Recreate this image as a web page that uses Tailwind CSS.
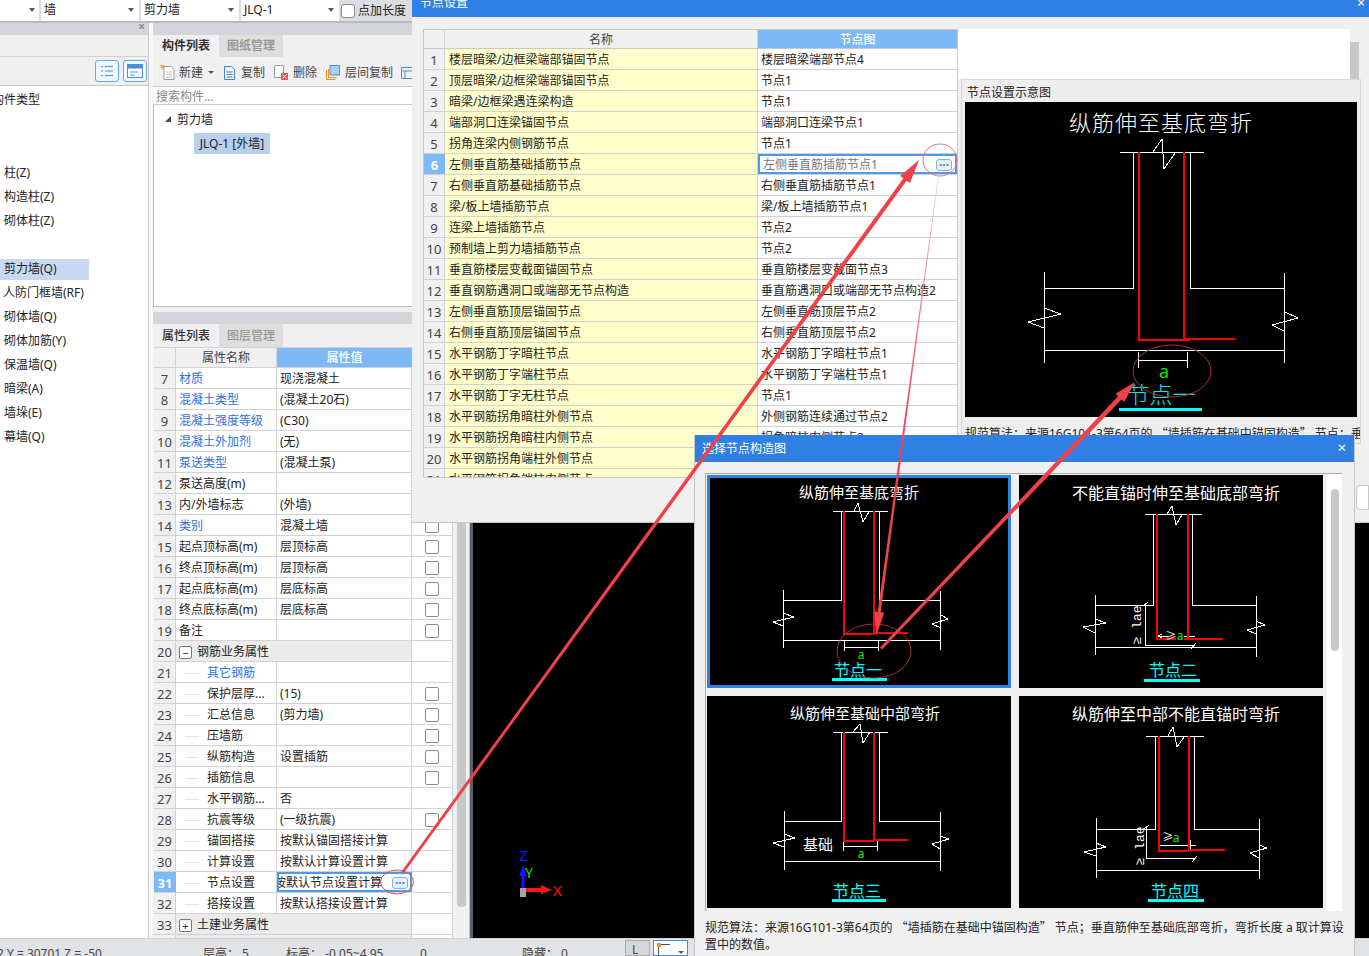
<!DOCTYPE html>
<html lang="zh-CN">
  <head>
    <meta charset="UTF-8" />
    <title>节点设置</title>
    <script src="https://cdn.jsdelivr.net/npm/@tailwindcss/browser@4"></script>
  </head>
  <body class="m-0 font-['Noto_Sans','Noto_Sans_CJK_SC',sans-serif] text-[12px] leading-none text-[#222]">
    <div class="relative flex h-[956px] w-[1369px] flex-col overflow-hidden bg-[#f0f0f0]">
      <!-- Top selectors -->
      <div class="flex h-[23px] shrink-0 gap-[2px] border-b-2 border-[#b9bbc0] bg-[#dcdde1]">
        <div class="relative h-[21px] w-[39px] bg-white"><span class="absolute left-[29px] top-[8px] h-0 w-0 border-x-[3px] border-t-[4px] border-x-transparent border-t-[#555]"></span></div>
        <div class="relative flex h-[21px] w-[98px] items-center bg-white pb-[2px] pl-[3px] text-[12px]">墙<span class="absolute right-[5px] top-[8px] h-0 w-0 border-x-[3px] border-t-[4px] border-x-transparent border-t-[#555]"></span></div>
        <div class="relative flex h-[21px] w-[98px] items-center bg-white pb-[2px] pl-[3px]">剪力墙<span class="absolute right-[5px] top-[8px] h-0 w-0 border-x-[3px] border-t-[4px] border-x-transparent border-t-[#555]"></span></div>
        <div class="relative flex h-[21px] w-[98px] items-center bg-white pb-[2px] pl-[3px]">JLQ-1<span class="absolute right-[5px] top-[8px] h-0 w-0 border-x-[3px] border-t-[4px] border-x-transparent border-t-[#555]"></span></div>
        <div class="flex h-[21px] items-center gap-[3px] whitespace-nowrap"><span class="h-[14px] w-[14px] rounded-[3px] border border-[#888] bg-white"></span>点加长度</div>
      </div>

      <div class="flex min-h-0 flex-1">
        <!-- Component type panel -->
        <div class="flex w-[149px] shrink-0 flex-col border-r border-[#c8c8c8] bg-white">
          <div class="relative h-[12px] bg-[#d3d5da]"><span class="absolute right-[3px] top-[-2px] text-[12px] font-bold text-[#8a8a8a]">×</span></div>
          <div class="h-[22px] border-b border-[#d0d0d0] bg-[#f0f0f0]"></div>
          <div class="flex h-[29px] items-center justify-end gap-[4px] border-b border-[#c8c8c8] bg-[#f0f0f0] pr-[1px]">
            <div class="flex h-[22px] w-[24px] items-center justify-center rounded-[3px] border border-[#62a8ee] bg-[#f0f7fe]">
              <svg width="14" height="14" viewBox="0 0 14 14" fill="none" stroke="#4a90d9"><path d="M1 2.5h2M1 7h2M1 11.5h2M5 2.5h8M5 7h8M5 11.5h8" /></svg>
            </div>
            <div class="flex h-[22px] w-[24px] items-center justify-center rounded-[3px] border border-[#62a8ee] bg-[#f0f7fe]">
              <svg width="16" height="14" viewBox="0 0 16 14"><rect x="0.5" y="0.5" width="15" height="13" fill="#fff" stroke="#4a90d9" /><rect x="1" y="1" width="14" height="3.5" fill="#4a90d9" /><path d="M3 8h8M3 11h5" stroke="#4a90d9" /></svg>
            </div>
          </div>
          <div class="mt-[2px] pl-[4px]">
            <div class="-ml-[12px] flex h-[24px] items-center">构件类型</div>
            <div class="mt-[49px] flex h-[24px] items-center">柱(Z)</div>
            <div class="flex h-[24px] items-center">构造柱(Z)</div>
            <div class="flex h-[24px] items-center">砌体柱(Z)</div>
            <div class="mt-[24px] -ml-[4px] flex h-[24px] items-center"><span class="flex h-[21px] w-[89px] items-center bg-[#c7d8f0] pl-[4px]">剪力墙(Q)</span></div>
            <div class="-ml-[1px] flex h-[24px] items-center">人防门框墙(RF)</div>
            <div class="flex h-[24px] items-center">砌体墙(Q)</div>
            <div class="flex h-[24px] items-center">砌体加筋(Y)</div>
            <div class="flex h-[24px] items-center">保温墙(Q)</div>
            <div class="flex h-[24px] items-center">暗梁(A)</div>
            <div class="flex h-[24px] items-center">墙垛(E)</div>
            <div class="flex h-[24px] items-center">幕墙(Q)</div>
          </div>
        </div>
        <div class="w-[4px] shrink-0 bg-[#f7f7f7]"></div>

        <!-- Component list and properties -->
        <div class="flex w-[317px] shrink-0 flex-col border-r border-[#c4c4c4] bg-[#f0f0f0]">
          <div class="h-[12px] bg-[#d3d5da]"></div>
          <div class="flex h-[22px] pl-[1px]">
            <div class="flex w-[64px] items-center justify-center font-bold text-[#333]">构件列表</div>
            <div class="ml-[1px] flex w-[64px] items-center justify-center bg-[#dedede] font-bold text-[#999]">图纸管理</div>
          </div>
          <div class="flex h-[29px] items-center whitespace-nowrap pl-[7px] pt-[2px] text-[#444]">
            <svg width="16" height="16" viewBox="0 0 16 16" fill="none"><path d="M4 1.5h7l3 3v10H4z" fill="#fff" stroke="#999" /><path d="M6 7h6M6 9.5h6M6 12h6" stroke="#bbb" /><path d="M0 1h5M2.500 0v4M1 0l3 3M4 0L1 3" stroke="#f29b2f" /></svg>
            <span class="ml-[3px]">新建</span>
            <span class="ml-[5px] h-0 w-0 border-x-[3px] border-t-[3px] border-x-transparent border-t-[#555]"></span>
            <svg class="ml-[9px]" width="13" height="14" viewBox="0 0 13 14" fill="none" stroke="#4a84c4"><path d="M1.500 0.500h7l3 3v10h-10zM3.500 6h6M3.500 8.500h6M3.500 11h6" /></svg>
            <span class="ml-[5px]">复制</span>
            <svg class="ml-[9px]" width="14" height="15" viewBox="0 0 14 15"><path d="M0.500 0.500h9v12h-9z" fill="#fff" stroke="#999" /><rect x="7" y="8" width="7" height="7" fill="#e45a5a" /><path d="M8.500 9.500l4 4M12.500 9.500l-4 4" stroke="#fff" /></svg>
            <span class="ml-[5px]">删除</span>
            <svg class="ml-[9px]" width="14" height="15" viewBox="0 0 14 15"><path d="M0.500 5v9.500h9M2.500 4v8.500h8" fill="none" stroke="#f08c2e" /><rect x="4" y="0.500" width="9.500" height="9.500" fill="#a9cdf3" stroke="#4a90d9" /></svg>
            <span class="ml-[5px]">层间复制</span>
            <svg class="ml-[8px]" width="12" height="14" viewBox="0 0 12 14" fill="none" stroke="#4a90d9"><path d="M0.500 1.500h11v11h-11zM0.500 5h11M4 5v7" /></svg>
          </div>
          <div class="flex h-[19px] items-center border-y border-[#c8c8c8] bg-white pl-[3px] pt-[2px] text-[#888]">搜索构件...</div>
          <div class="relative h-[202px] border-b border-l border-[#bdbdbd] bg-white">
            <span class="absolute left-[11px] top-[11px] h-0 w-0 border-b-[6px] border-l-[6px] border-b-[#444] border-l-transparent"></span>
            <span class="absolute left-[23px] top-[9px]">剪力墙</span>
            <span class="absolute left-[40px] top-[28px] flex h-[21px] w-[76px] items-center justify-center bg-[#b8d0f0]">JLQ-1 [外墙]</span>
          </div>
          <div class="h-[5px]"></div>
          <div class="h-[12px] bg-[#d3d5da]"></div>
          <div class="flex h-[23px] pl-[1px]">
            <div class="flex w-[64px] items-center justify-center font-medium text-[#333]">属性列表</div>
            <div class="ml-[1px] flex w-[64px] items-center justify-center bg-[#dedede] font-medium text-[#999]">图层管理</div>
          </div>
          <div class="flex min-h-0 flex-1 items-start overflow-hidden">
            <div id="propTable" class="ml-[1px] w-[299px] shrink-0 bg-white"></div>
            <div class="ml-[4px] mt-[20px] h-[540px] w-[9px] shrink-0 rounded-[4px] bg-[#c8c8c8]"></div>
          </div>
        </div>
        <div class="w-[3px] shrink-0 bg-[#5a6068]"></div>
        <div class="relative flex-1 bg-black">
          <!-- axis gizmo -->
          <svg class="absolute left-[40px] top-[822px]" width="60" height="60" viewBox="0 0 60 60">
            <text x="6" y="16" font-size="15" fill="#1414ff">Z</text>
            <path d="M10 20L14 31H11.500V44H8.500V31H6Z" fill="#1414ff" />
            <text x="12" y="33" font-size="14" fill="#19e619">Y</text>
            <path d="M13 43H28V40L39 45L28 49V47H13Z" fill="#ff1414" />
            <rect x="7" y="43" width="6" height="9" fill="#a6a6a6" />
            <text x="40" y="51" font-size="15" fill="#ff1414">X</text>
          </svg>
        </div>
      </div>

      <!-- Status bar -->
      <div class="flex h-[18px] shrink-0 border-t border-[#cfd0d4] bg-[#e2e3e7] pt-[9px] whitespace-nowrap text-[#444]">
        <span class="absolute left-[-3px]">2 Y = 30701 Z = -50</span>
        <span class="absolute left-[203px]">层高： 5</span>
        <span class="absolute left-[286px]">标高： -0.05~4.95</span>
        <span class="absolute left-[420px]">0</span>
        <span class="absolute left-[522px]">隐藏： 0</span>
        <span class="absolute left-[625px] bottom-0 h-[16px] w-[25px] border border-[#aaa] bg-[#d6d7da] pl-[6px] pt-[3px]">L</span>
        <span class="absolute left-[653px] bottom-0 h-[16px] w-[35px] border border-[#3d8de0] bg-white">
          <span class="ml-[4px] mt-[3px] block h-[14px] w-[12px] border-l border-t border-[#555]"></span>
          <span class="absolute left-[3px] top-[2px] h-[4px] w-[4px] bg-[#f0913a]"></span>
          <span class="absolute right-[3px] top-[10px] h-0 w-0 border-x-[3px] border-t-[3px] border-x-transparent border-t-[#555]"></span>
        </span>
      </div>

      <!-- Node settings window -->
      <div class="absolute left-[412px] top-0 flex h-[523px] w-[957px] flex-col border-b border-[#c4c6cc] bg-[#f0f0f0]">
        <div class="relative flex h-[17px] shrink-0 items-start overflow-hidden bg-[#2f80e2] pl-[8px] text-white">
          <span class="-mt-[3px]">节点设置</span>
          <span class="absolute right-[4px] top-[-4px] text-[14px]">×</span>
        </div>
        <div class="flex pt-[12px] pl-[11px]">
          <div class="h-[449px] w-[535px] shrink-0 overflow-hidden border-x border-b border-[#c8c8c8] bg-white">
            <div class="flex h-[20px] border-y border-[#c8c8c8] bg-[#f0f0f0]">
              <div class="w-[21px] border-r border-[#d0d2d6]"></div>
              <div class="flex w-[313px] items-center justify-center border-r border-[#d0d2d6] pt-[2px] text-[#444]">名称</div>
              <div class="flex flex-1 items-center justify-center bg-[#7eb9f7] pt-[2px] font-medium text-white">节点图</div>
            </div>
            <div id="nodeTable"></div>
          </div>
          <div class="flex w-[411px] flex-col">
            <div class="relative h-[50px] w-[392px] bg-white">
              <div class="absolute left-[392px] top-[13px] h-[37px] w-[9px] bg-[#c8c8c8]"></div>
            </div>
            <div class="ml-[3px] w-[400px] border border-[#d6d6d6] bg-[#eeeeee] pl-[3px]">
              <div class="flex h-[22px] items-center pl-[2px] pt-[3px]">节点设置示意图</div>
              <svg class="block" width="392" height="315" viewBox="0 0 392 315" shape-rendering="crispEdges">
                <rect width="392" height="315" fill="#000" />
                <text x="196" y="29" font-size="22" fill="#fff" text-anchor="middle" letter-spacing="1" font-weight="300">纵筋伸至基底弯折</text>
                <path fill="none" stroke="#fff" d="M155 50H239M168 50V186H79M79 170V261M79 248H319M319 171V261M225 50V186H319M188 50L197 37L199 67L210 51M79 206L96 212L63 220L79 226M320 210L333 216L307 223L319 229M173 258H222M173 250V266M222 250V266" />
                <path fill="none" stroke="#f00" stroke-width="2" d="M174 50V238H225M219 50V238M219 237H270" />
                <text x="199" y="276" font-size="18" fill="#00e600" text-anchor="middle">a</text>
                <text x="196" y="301" font-size="23" fill="#00e5ff" text-anchor="middle" font-weight="300">节点一</text>
                <rect x="154" y="306" width="83" height="3" fill="#00ffff" />
              </svg>
              <div class="mt-[10px] h-[16px] overflow-hidden whitespace-nowrap">规范算法：来源16G101-3第64页的 <span class="font-['Noto_Sans_CJK_SC']">“</span>墙插筋在基础中锚固构造<span class="font-['Noto_Sans_CJK_SC']">”</span> 节点：垂直筋伸至基础底部弯折，</div>
            </div>
          </div>
        </div>
        <div class="absolute left-[944px] top-[485px] h-[25px] w-[13px] rounded-l-[4px] border border-[#c8c8c8] bg-white"></div>
      </div>

      <!-- Choose node diagram window -->
      <div class="absolute left-[694px] top-[435px] flex h-[521px] w-[661px] flex-col border-x border-[#c4c6cc] bg-[#f0f0f0]">
        <div class="relative flex h-[27px] shrink-0 items-center bg-[#2f80e2] pl-[7px] text-white">
          选择节点构造图
          <span class="absolute right-[8px] top-[5px] text-[15px]">×</span>
        </div>
        <div class="ml-[10px] mt-[11px] flex h-[438px] w-[637px] shrink-0 border-l border-t border-[#aaaaaa]">
          <div class="grid w-[622px] shrink-0 grid-cols-[304px_304px] grid-rows-[213px_212px] gap-x-[8px] gap-y-[8px] pl-[1px] pt-[1px]">
            <div class="border-[3px] border-[#2f80e2]">
              <svg class="block" width="298" height="207" viewBox="0 0 298 207" shape-rendering="crispEdges">
                <rect width="298" height="207" fill="#000" />
                <text x="149" y="20" font-size="15" fill="#fff" text-anchor="middle">纵筋伸至基底弯折</text>
                <path fill="none" stroke="#fff" d="M123 33H178M131 33V122H73M73 112V170M73 162H230M230 113V172M169 33V122H230M144 33L148 25L153 44L159 34M73 135L84 139L63 144L73 148M231 137L238 141L222 146L231 150M134 169H168M134 163V173M168 163V173" />
                <path fill="none" stroke="#f00" stroke-width="2" d="M134 33V156H164M164 33V156M164 155H198" />
                <text x="151" y="181" font-size="12" fill="#19e619" text-anchor="middle">a</text>
                <text x="148" y="198" font-size="16" fill="#00ffff" text-anchor="middle">节点一</text>
                <rect x="122" y="200" width="55" height="3" fill="#00ffff" />
              </svg>
            </div>
            <svg class="block" width="304" height="213" viewBox="0 0 304 213" shape-rendering="crispEdges">
              <rect width="304" height="213" fill="#000" />
              <text x="157" y="24" font-size="16" fill="#fff" text-anchor="middle">不能直锚时伸至基础底部弯折</text>
              <path fill="none" stroke="#fff" d="M126 39H183M134 39V130H76M76 120V180M76 172H237M237 121V182M173 39V130H237M148 39L153 31L157 50L163 40M76 144L87 148L64 152L76 158M237 146L246 150L228 155L237 159M126 128V170H174M124 131L129 127M172 174L177 168M139 161H149M165 161H176M139 161L143 159M139 161L143 163" />
              <path fill="none" stroke="#f00" stroke-width="2" d="M138 39V164H157M169 39V164M165 164H204" />
              <text x="0" y="0" font-size="13" fill="#fff" text-anchor="middle" transform="translate(122 150) rotate(-90)" font-family="Liberation Mono">≥ lae</text>
              <text x="152" y="165" font-size="11" fill="#fff" text-anchor="middle">≥</text>
              <text x="161" y="165" font-size="12" fill="#19e619" text-anchor="middle">a</text>
              <text x="154" y="201" font-size="16" fill="#00ffff" text-anchor="middle">节点二</text>
              <rect x="125" y="204" width="56" height="3" fill="#00ffff" />
            </svg>
            <svg class="block" width="304" height="212" viewBox="0 0 304 212" shape-rendering="crispEdges">
              <rect width="304" height="212" fill="#000" />
              <text x="158" y="23" font-size="15" fill="#fff" text-anchor="middle">纵筋伸至基础中部弯折</text>
              <path fill="none" stroke="#fff" d="M126 36H181M134 36V125H77M77 115V174M77 165H233M233 116V175M172 36V125H233M146 36L153 28L156 47L163 36M77 138L88 142L66 147L77 151M233 140L242 143L225 148L233 153M136 150H170M136 145V155M170 145V155" />
              <path fill="none" stroke="#f00" stroke-width="2" d="M137 36V145H167M167 36V145M167 144H201" />
              <text x="111" y="154" font-size="15" fill="#fff" text-anchor="middle">基础</text>
              <text x="154" y="162" font-size="12" fill="#19e619" text-anchor="middle">a</text>
              <text x="150" y="201" font-size="16" fill="#00ffff" text-anchor="middle">节点三</text>
              <rect x="125" y="203" width="54" height="3" fill="#00ffff" />
            </svg>
            <svg class="block" width="304" height="212" viewBox="0 0 304 212" shape-rendering="crispEdges">
              <rect width="304" height="212" fill="#000" />
              <text x="157" y="24" font-size="16" fill="#fff" text-anchor="middle">纵筋伸至中部不能直锚时弯折</text>
              <path fill="none" stroke="#fff" d="M127 40H185M136 40V133H77M77 122V182M77 174H240M240 123V183M175 40V133H240M149 40L154 31L158 51L165 41M77 147L87 151L65 156L77 160M240 149L248 152L231 157L240 162M127 131V162H175M125 133L130 129M173 166L178 160M140 149H177M140 144V155M171 144V155" />
              <path fill="none" stroke="#f00" stroke-width="2" d="M140 40V155H170M170 40V155M170 154H206" />
              <text x="0" y="0" font-size="13" fill="#fff" text-anchor="middle" transform="translate(125 150) rotate(-90)" font-family="Liberation Mono">≥ lae</text>
              <text x="149" y="145" font-size="11" fill="#fff" text-anchor="middle">≥</text>
              <text x="157" y="146" font-size="12" fill="#19e619" text-anchor="middle">a</text>
              <text x="156" y="201" font-size="16" fill="#00ffff" text-anchor="middle">节点四</text>
              <rect x="129" y="203" width="56" height="3" fill="#00ffff" />
            </svg>
          </div>
          <div class="ml-[-1px] w-[15px] bg-white pl-[4px] pt-[15px]">
            <div class="h-[162px] w-[8px] rounded-[4px] bg-[#c8c8c8]"></div>
          </div>
        </div>
        <div class="ml-[10px] mt-[7px] w-[642px] leading-[17px] text-[#222]">规范算法：来源16G101-3第64页的 <span class="font-['Noto_Sans_CJK_SC']">“</span>墙插筋在基础中锚固构造<span class="font-['Noto_Sans_CJK_SC']">”</span> 节点；垂直筋伸至基础底部弯折，弯折长度 a 取计算设置中的数值。</div>
      </div>

      <!-- Red markup drawn over the screenshot -->
      <svg class="pointer-events-none absolute left-0 top-0" width="1369" height="956" viewBox="0 0 1369 956">
        <defs>
          <linearGradient id="fade" gradientUnits="userSpaceOnUse" x1="938" y1="177" x2="900" y2="450">
            <stop offset="0" stop-color="#f8b8bc" />
            <stop offset="1" stop-color="#f04048" />
          </linearGradient>
        </defs>
        <ellipse cx="397" cy="882" rx="16.500" ry="12" fill="none" stroke="#e8505a" />
        <ellipse cx="940" cy="160" rx="17" ry="16" fill="none" stroke="#e8707a" />
        <ellipse cx="1172" cy="371" rx="39" ry="26" fill="none" stroke="#a83030" />
        <ellipse cx="874" cy="651" rx="37" ry="27" fill="none" stroke="#a83030" />
        <path d="M401.500 871.500L403.500 873.500L906.600 180.700L910 183L919 160L900 176L903.400 178.300Z" fill="#f04048" />
        <path d="M938 177L938.500 177L880.700 612L884.200 613L876 636L874.200 611L877.700 612Z" fill="url(#fade)" />
        <path d="M880 647.500L882 649.500L1121.500 399.500L1124.100 402L1135 382L1115.500 393.800L1118.100 396.300Z" fill="#f04048" />
      </svg>
    </div>

    <script>
      const props = [
        [7, "材质", "现浇混凝土", 1, 1],
        [8, "混凝土类型", "(混凝土20石)", 1, 1],
        [9, "混凝土强度等级", "(C30)", 1, 1],
        [10, "混凝土外加剂", "(无)", 1, 1],
        [11, "泵送类型", "(混凝土泵)", 1, 1],
        [12, "泵送高度(m)", "", 0, 1],
        [13, "内/外墙标志", "(外墙)", 0, 1],
        [14, "类别", "混凝土墙", 1, 1],
        [15, "起点顶标高(m)", "层顶标高", 0, 1],
        [16, "终点顶标高(m)", "层顶标高", 0, 1],
        [17, "起点底标高(m)", "层底标高", 0, 1],
        [18, "终点底标高(m)", "层底标高", 0, 1],
        [19, "备注", "", 0, 1],
      ];
      const rebar = [
        [21, "其它钢筋", "", 1, 0],
        [22, "保护层厚...", "(15)", 0, 1],
        [23, "汇总信息", "(剪力墙)", 0, 1],
        [24, "压墙筋", "", 0, 1],
        [25, "纵筋构造", "设置插筋", 0, 1],
        [26, "插筋信息", "", 0, 1],
        [27, "水平钢筋...", "否", 0, 0],
        [28, "抗震等级", "(一级抗震)", 0, 1],
        [29, "锚固搭接", "按默认锚固搭接计算", 0, 0],
        [30, "计算设置", "按默认计算设置计算", 0, 0],
        [31, "节点设置", "", 0, 0],
        [32, "搭接设置", "按默认搭接设置计算", 0, 0],
      ];

      const check = (on) =>
        on ? '<span class="h-[14px] w-[14px] rounded-[2px] border border-[#8c8c8c] bg-white"></span>' : "";

      function propRow([n, name, value, link, box]) {
        return `<div class="flex h-[21px] border-b border-[#d0d2d6] [&>div]:pt-[2px]">
          <div class="flex w-[22px] shrink-0 items-center justify-center border-r border-[#d0d2d6] bg-[#f0f0f0] text-[13px] text-[#444]">${n}</div>
          <div class="flex w-[101px] shrink-0 items-center border-r border-[#d0d2d6] pl-[3px] ${link ? "text-[#2f6fe0]" : ""}">${name}</div>
          <div class="flex w-[135px] shrink-0 items-center border-r border-[#d0d2d6] pl-[3px]">${value}</div>
          <div class="flex w-[41px] shrink-0 items-center justify-center border-r border-[#d0d2d6]">${check(box)}</div>
        </div>`;
      }

      function groupRow(n, name, sign) {
        return `<div class="flex h-[21px] border-b border-[#d0d2d6] [&>div]:pt-[2px]">
          <div class="flex w-[22px] shrink-0 items-center justify-center border-r border-[#d0d2d6] bg-[#f0f0f0] text-[13px] text-[#444]">${n}</div>
          <div class="flex w-[101px] shrink-0 items-center bg-[#ebebeb] pl-[3px]">
            <span class="flex h-[13px] w-[13px] items-center justify-center rounded-[2px] border border-[#777] bg-white text-[11px]">${sign}</span>
            <span class="ml-[5px]">${name}</span>
          </div>
          <div class="w-[135px] shrink-0 border-r border-[#d0d2d6] bg-[#ebebeb]"></div>
          <div class="w-[41px] shrink-0 border-r border-[#d0d2d6]"></div>
        </div>`;
      }

      function subRow([n, name, value, link, box]) {
        const selected = n === 31;
        const num = selected
          ? '<div class="flex w-[22px] shrink-0 items-center justify-center bg-[#7eb9f7] text-[13px] font-bold text-white">31</div>'
          : `<div class="flex w-[22px] shrink-0 items-center justify-center border-r border-[#d0d2d6] bg-[#f0f0f0] text-[13px] text-[#444]">${n}</div>`;
        const cell = selected
          ? `<div class="relative flex w-[135px] shrink-0 items-center overflow-hidden border-2 border-[#4f9ae8] pl-[1px] whitespace-nowrap"><span class="-ml-[6px]">按默认节点设置计算</span>
               <span class="absolute right-[2px] top-[3px] flex h-[12px] w-[16px] items-center justify-center rounded-[3px] border border-[#7eb4ec] bg-[#e6f1fc] text-[12px] font-bold text-[#3d7fc9]">···</span></div>`
          : `<div class="flex w-[135px] shrink-0 items-center border-r border-[#d0d2d6] pl-[3px]">${value}</div>`;
        return `<div class="flex h-[21px] border-b border-[#d0d2d6] [&>div]:pt-[2px]">
          ${num}
          <div class="flex w-[101px] shrink-0 items-center border-r border-[#d0d2d6] ${link ? "text-[#2f6fe0]" : ""}">
            <span class="ml-[9px] mr-[8px] h-px w-[14px] bg-[#e0e0e0]"></span><span class="whitespace-nowrap">${name}</span>
          </div>
          ${cell}
          <div class="flex w-[41px] shrink-0 items-center justify-center border-r border-[#d0d2d6]">${check(box)}</div>
        </div>`;
      }

      document.getElementById("propTable").innerHTML =
        `<div class="flex h-[21px] border-y border-[#d0d2d6] bg-[#f0f0f0]">
          <div class="w-[22px] shrink-0 border-r border-[#d0d2d6]"></div>
          <div class="flex w-[101px] shrink-0 items-center justify-center border-r border-[#d0d2d6] text-[#444]">属性名称</div>
          <div class="flex w-[135px] shrink-0 items-center justify-center bg-[#7eb9f7] font-medium text-white">属性值</div>
        </div>` +
        props.map(propRow).join("") +
        groupRow(20, "钢筋业务属性", "−") +
        rebar.map(subRow).join("") +
        groupRow(33, "土建业务属性", "+") +
        groupRow("", "", "");

      const nodes = [
        ["楼层暗梁/边框梁端部锚固节点", "楼层暗梁端部节点4"],
        ["顶层暗梁/边框梁端部锚固节点", "节点1"],
        ["暗梁/边框梁遇连梁构造", "节点1"],
        ["端部洞口连梁锚固节点", "端部洞口连梁节点1"],
        ["拐角连梁内侧钢筋节点", "节点1"],
        ["左侧垂直筋基础插筋节点", "左侧垂直筋插筋节点1"],
        ["右侧垂直筋基础插筋节点", "右侧垂直筋插筋节点1"],
        ["梁/板上墙插筋节点", "梁/板上墙插筋节点1"],
        ["连梁上墙插筋节点", "节点2"],
        ["预制墙上剪力墙插筋节点", "节点2"],
        ["垂直筋楼层变截面锚固节点", "垂直筋楼层变截面节点3"],
        ["垂直钢筋遇洞口或端部无节点构造", "垂直筋遇洞口或端部无节点构造2"],
        ["左侧垂直筋顶层锚固节点", "左侧垂直筋顶层节点2"],
        ["右侧垂直筋顶层锚固节点", "右侧垂直筋顶层节点2"],
        ["水平钢筋丁字暗柱节点", "水平钢筋丁字暗柱节点1"],
        ["水平钢筋丁字端柱节点", "水平钢筋丁字端柱节点1"],
        ["水平钢筋丁字无柱节点", "节点1"],
        ["水平钢筋拐角暗柱外侧节点", "外侧钢筋连续通过节点2"],
        ["水平钢筋拐角暗柱内侧节点", "拐角暗柱内侧节点2"],
        ["水平钢筋拐角端柱外侧节点", ""],
        ["水平钢筋拐角端柱内侧节点", ""],
      ];

      document.getElementById("nodeTable").innerHTML = nodes
        .map(([name, value], i) => {
          const selected = i === 5;
          const num = selected
            ? '<div class="flex w-[21px] shrink-0 items-center justify-center bg-[#7eb9f7] text-[13px] font-bold text-white">6</div>'
            : `<div class="flex w-[21px] shrink-0 items-center justify-center border-r border-[#d0d2d6] bg-[#f0f0f0] text-[13px] text-[#444]">${i + 1}</div>`;
          const cell = selected
            ? `<div class="relative flex flex-1 items-center border-2 border-[#4f9ae8] pl-[3px] text-[#777]">${value}
                 <span class="absolute right-[3px] top-[3px] flex h-[12px] w-[16px] items-center justify-center rounded-[3px] border border-[#7eb4ec] bg-[#e6f1fc] text-[12px] font-bold text-[#3d7fc9]">···</span></div>`
            : `<div class="flex flex-1 items-center pl-[3px] whitespace-nowrap">${value}</div>`;
          return `<div class="flex h-[21px] border-b border-[#d0d2d6] [&>div]:pt-[2px]">
            ${num}
            <div class="flex w-[313px] shrink-0 items-center border-r border-[#d0d2d6] bg-[#ffffcc] pl-[4px]">${name}</div>
            ${cell}
          </div>`;
        })
        .join("");
    </script>
  </body>
</html>
